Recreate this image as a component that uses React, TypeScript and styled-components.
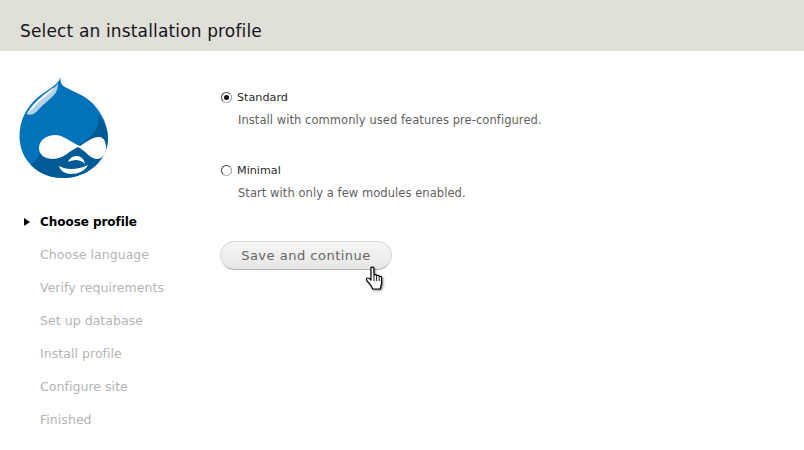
import React from "react";
import styled, { createGlobalStyle } from "styled-components";

const GlobalStyle = createGlobalStyle`
  html, body {
    margin: 0;
    padding: 0;
    background: #fff;
    font-family: "DejaVu Sans", Verdana, sans-serif;
  }
`;

const Page = styled.div`
  width: 804px;
  height: 450px;
  overflow: hidden;
  display: flex;
  flex-direction: column;
`;

const Header = styled.header`
  height: 51px;
  flex: none;
  background: #e0dfd8;
  display: flex;
  align-items: center;
  padding: 11px 0 0 20px;
  box-sizing: border-box;
`;

const Title = styled.h1`
  margin: 0;
  font-size: 17px;
  font-weight: 400;
  letter-spacing: 0.15px;
  color: #14141c;
`;

const Body = styled.div`
  flex: 1;
  display: flex;
`;

const Sidebar = styled.aside`
  width: 220px;
  flex: none;
  padding: 25px 0 0 19px;
  box-sizing: border-box;
`;

const Logo = styled.svg`
  display: block;
  width: 90px;
  height: 103px;
`;

const Steps = styled.ol`
  list-style: none;
  margin: 26px 0 0;
  padding: 0 0 0 4px;
  display: flex;
  flex-direction: column;
`;

const Step = styled.li<{ $active?: boolean }>`
  position: relative;
  height: 33px;
  line-height: ${(p) => (p.$active ? "35px" : "33px")};
  padding-left: 17px;
  font-size: ${(p) => (p.$active ? "12px" : "12.5px")};
  letter-spacing: ${(p) => (p.$active ? "-0.05px" : "0.05px")};
  font-weight: ${(p) => (p.$active ? 700 : 400)};
  color: ${(p) => (p.$active ? "#000" : "#b4b4b4")};
`;

const Arrow = styled.span`
  position: absolute;
  left: 1px;
  top: 13px;
  width: 0;
  height: 0;
  border-style: solid;
  border-width: 4px 0 4px 6px;
  border-color: transparent transparent transparent #000;
`;

const Main = styled.main`
  flex: 1;
  padding-top: 38px;
`;

const Option = styled.div`
  height: 73px;
`;

const OptionLabel = styled.label`
  display: flex;
  align-items: center;
  gap: 5px;
  height: 16px;
  padding-left: 1px;
  font-size: 11.2px;
  color: #2b2b2b;
`;

const Radio = styled.span<{ $checked?: boolean }>`
  width: 11px;
  height: 11px;
  box-sizing: border-box;
  border-radius: 50%;
  border: 1px solid #444;
  border-bottom-color: #b0b0b0;
  border-right-color: #999;
  background: #fff;
  display: flex;
  align-items: center;
  justify-content: center;
  &::after {
    content: "";
    display: ${(p) => (p.$checked ? "block" : "none")};
    width: 5px;
    height: 5px;
    border-radius: 50%;
    background: #111;
  }
`;

const Description = styled.div`
  margin: 7px 0 0 18px;
  font-size: 11.5px;
  line-height: 16px;
  letter-spacing: 0.06px;
  color: #5f5f5f;
`;

const ButtonWrap = styled.div`
  position: relative;
  width: 172px;
  margin-top: 6px;
`;

const SaveButton = styled.button`
  display: block;
  width: 172px;
  height: 29px;
  box-sizing: border-box;
  padding: 0;
  border: 1px solid #d8d8d4;
  border-bottom-color: #b4b4b0;
  border-radius: 15px;
  background: linear-gradient(#f6f6f5, #e6e6e4);
  font-family: "DejaVu Sans", Verdana, sans-serif;
  font-size: 13px;
  letter-spacing: 0.5px;
  color: #666;
`;

const Cursor = styled.svg`
  position: absolute;
  left: 145px;
  top: 25px;
  width: 22px;
  height: 28px;
`;

const steps = [
  "Choose profile",
  "Choose language",
  "Verify requirements",
  "Set up database",
  "Install profile",
  "Configure site",
  "Finished",
];

const DrupalLogo = () => (
  <Logo viewBox="19 76 90 103">
    <path
      d="M60.3 77 C60 83 62 86 67 88 C72 91 78 93 83 96 C98 105 108 122 108 138 C108 160 88 178 63 178 C38 178 19.5 160 19.5 136 C19.5 121 26 108 36 99 C44 92 52 88 56 84 C58 82 59.5 80 60.3 77 Z"
      fill="#0073ba"
    />
    <path
      d="M98 114 C104 122 108 130 108 138 C108 160 88 178 63 178 C50 178 39 173 31 165 C35 162 38 158 40 153 L78 146 C90 138 101 130 98 114 Z"
      fill="#005a96"
    />
    <path
      d="M56 86 C48 92 33 101 26.5 114 C31 116 35 114 39 109 C43 104 50 100 54 95 C57 92 58 87 58 83 Z"
      fill="#b5d2e8"
    />
    <path
      d="M54 87.5 C46 93 34 102 28 113 C33 109 36 104 41 100 C47 95 52 92 54 87.5 Z"
      fill="#ffffff"
    />
    <path
      d="M39 148 C39 140 47 135 55 135 C64 135 72 143 80 146 C85 143 92 137 99 137 C104 137 106 142 106 148 C106 154 102 159 97 159 C90 159 85 150 78 147 C70 150 64 159 53 159 C45 159 39 155 39 148 Z"
      fill="#ffffff"
    />
    <path
      d="M68 162 C70 157 74 156 77 156 C81 156 84 159 85 164 C82 161 79 160 76 160 C73 160 70 161 68 162 Z"
      fill="#ffffff"
    />
    <path
      d="M59 166 C66 170 78 170 88 165 C85 171 78 174 71 174 C66 174 60 171 59 166 Z"
      fill="#ffffff"
    />
  </Logo>
);

export default function App() {
  return (
    <Page>
      <GlobalStyle />
      <Header>
        <Title>Select an installation profile</Title>
      </Header>
      <Body>
        <Sidebar>
          <DrupalLogo />
          <Steps>
            {steps.map((name, i) => (
              <Step key={name} $active={i === 0}>
                {i === 0 && <Arrow />}
                {name}
              </Step>
            ))}
          </Steps>
        </Sidebar>
        <Main>
          <Option>
            <OptionLabel>
              <Radio $checked />
              Standard
            </OptionLabel>
            <Description>
              Install with commonly used features pre-configured.
            </Description>
          </Option>
          <Option>
            <OptionLabel>
              <Radio />
              Minimal
            </OptionLabel>
            <Description>Start with only a few modules enabled.</Description>
          </Option>
          <ButtonWrap>
            <SaveButton>Save and continue</SaveButton>
            <Cursor viewBox="0 0 22 28">
              <path
                d="M6 1.5 C7 0.7 8.5 1 8.8 2.2 L9 9 C10 8.3 11.2 8.6 11.6 9.6 C12.6 9 13.8 9.4 14.2 10.4 C15.4 10 16.6 10.8 16.6 12 L16.6 17 C16.6 19 15.6 20 15.4 23 L7.6 23 C7 20 4.6 17.6 2.2 15 C1 13.6 1.4 12.2 2.6 12 C3.6 11.8 4.8 12.8 6 14 Z"
                fill="#fff"
                stroke="#000"
                strokeWidth="1.2"
                strokeLinejoin="round"
                style={{ filter: "drop-shadow(1px 1px 1px rgba(0,0,0,0.5))" }}
              />
              <path d="M9 9 L9 15 M11.6 9.8 L11.6 15 M14.2 10.6 L14.2 15" stroke="#000" strokeWidth="0.9" fill="none" />
            </Cursor>
          </ButtonWrap>
        </Main>
      </Body>
    </Page>
  );
}
